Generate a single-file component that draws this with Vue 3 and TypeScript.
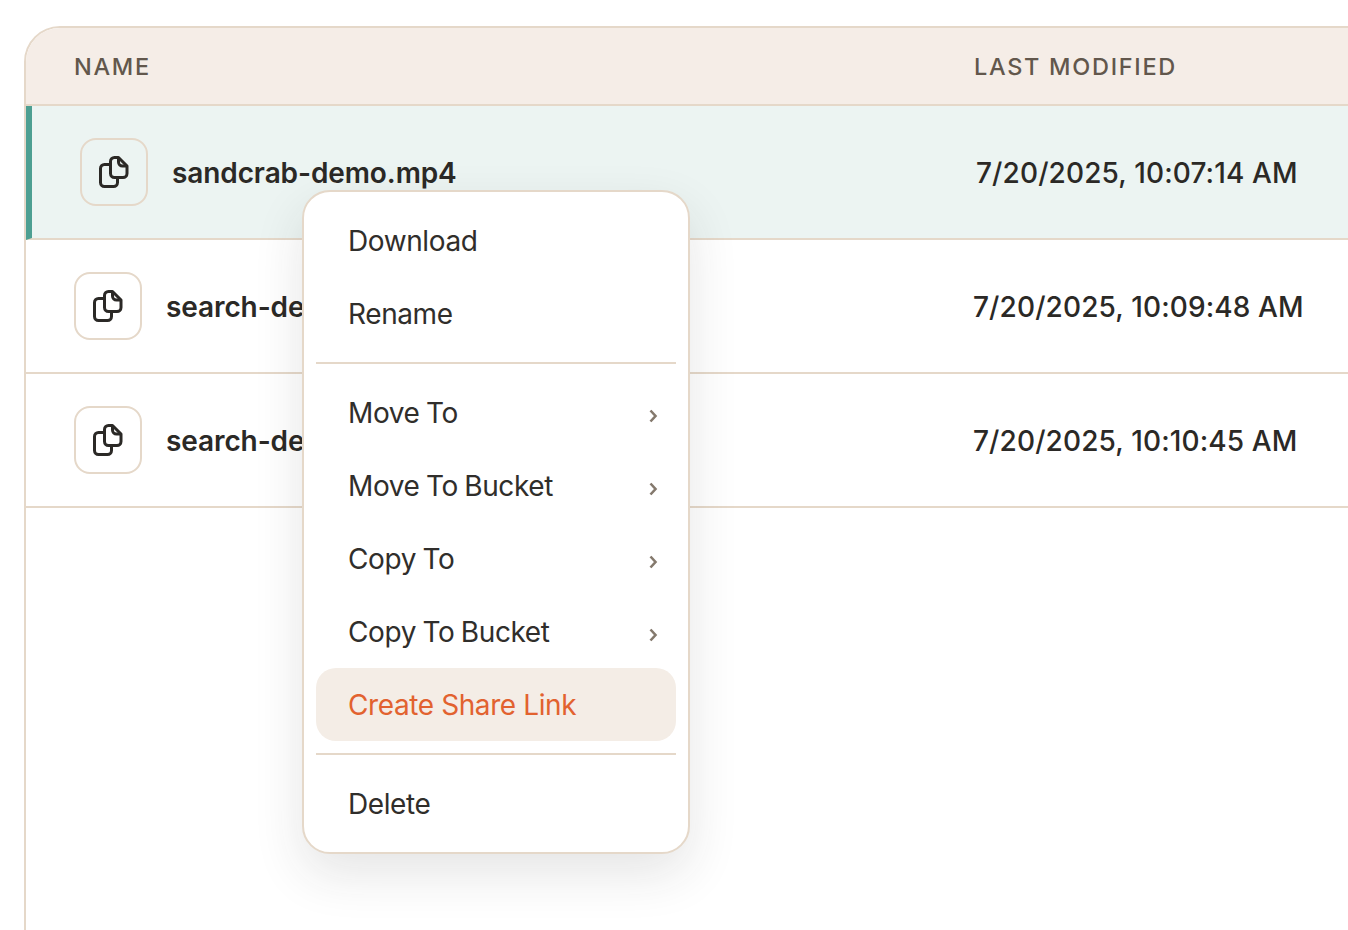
<script setup lang="ts">
type FileRow = { name: string; modified: string; selected?: boolean };

const files: FileRow[] = [
  { name: "sandcrab-demo.mp4", modified: "7/20/2025, 10:07:14 AM", selected: true },
  { name: "search-demo-1.mp4", modified: "7/20/2025, 10:09:48 AM" },
  { name: "search-demo-2.mp4", modified: "7/20/2025, 10:10:45 AM" },
];

type MenuItem = { label: string; sub?: boolean; active?: boolean };

const menuGroups: MenuItem[][] = [
  [{ label: "Download" }, { label: "Rename" }],
  [
    { label: "Move To", sub: true },
    { label: "Move To Bucket", sub: true },
    { label: "Copy To", sub: true },
    { label: "Copy To Bucket", sub: true },
    { label: "Create Share Link", active: true },
  ],
  [{ label: "Delete" }],
];
</script>

<template>
  <div class="page">
    <div class="table">
      <div class="head">
        <div class="head-name">NAME</div>
        <div>LAST MODIFIED</div>
      </div>
      <div
        v-for="file in files"
        :key="file.name"
        class="row"
        :class="{ selected: file.selected }"
      >
        <div class="name-cell">
          <span class="file-icon">
            <svg width="32" height="34" viewBox="0 0 32 34" fill="none">
              <path
                d="M12.500 9.500H6.500A4 4 0 0 0 2.500 13.500V27.500A4 4 0 0 0 6.500 31.500H15.500A4 4 0 0 0 19.500 27.500V22.500"
                stroke="currentColor"
                stroke-width="3"
                stroke-linejoin="round"
              />
              <path
                d="M16.500 2.500H20.500L29 11V18.500A4 4 0 0 1 25 22.500H16.500A4 4 0 0 1 12.500 18.500V6.500A4 4 0 0 1 16.500 2.500Z"
                stroke="currentColor"
                stroke-width="3"
                stroke-linejoin="round"
              />
              <path
                d="M20.500 2.500V7A4 4 0 0 0 24.500 11H29"
                stroke="currentColor"
                stroke-width="3"
                stroke-linejoin="round"
              />
            </svg>
          </span>
          <span class="file-name">{{ file.name }}</span>
        </div>
        <div class="date-cell">{{ file.modified }}</div>
      </div>
    </div>

    <div class="menu">
      <template v-for="(group, i) in menuGroups" :key="i">
        <div v-if="i > 0" class="divider"></div>
        <div
          v-for="item in group"
          :key="item.label"
          class="menu-item"
          :class="{ active: item.active }"
        >
          <span>{{ item.label }}</span>
          <svg v-if="item.sub" class="chevron" width="10" height="16" viewBox="0 0 10 16" fill="none">
            <path d="M2.500 2.500L7.500 8L2.500 13.500" stroke="currentColor" stroke-width="2.600" />
          </svg>
        </div>
      </template>
    </div>
  </div>
</template>

<style>
html,
body {
  margin: 0;
  height: 100%;
  overflow: hidden;
  background: #fff;
}
</style>

<style scoped>
.page {
  position: relative;
  width: 1348px;
  height: 930px;
  overflow: hidden;
  box-sizing: border-box;
  padding: 26px 0 0 24px;
  font-family: Inter, "Liberation Sans", sans-serif;
  color: #2b2926;
}

.table {
  width: 1500px;
  height: 1000px;
  box-sizing: border-box;
  border: 2px solid #e5d8c9;
  border-radius: 36px 0 0 0;
  overflow: hidden;
}

.head {
  display: flex;
  align-items: center;
  height: 76px;
  background: #f5ede7;
  border-bottom: 2px solid #e5d8c9;
  color: #62574c;
  font-size: 23.500px;
  font-weight: 500;
  letter-spacing: 1.700px;
}

.head > div {
  padding-top: 1px;
}

.head-name {
  width: 948px;
  padding-left: 48px;
  box-sizing: border-box;
  flex-shrink: 0;
}

.row {
  display: flex;
  align-items: center;
  height: 132px;
  border-bottom: 2px solid #e5d8c9;
  background: #fff;
}

.row.selected {
  background: #ecf4f2;
  border-left: 6px solid #4d9f92;
}

.name-cell {
  display: flex;
  align-items: center;
  gap: 24px;
  width: 947px;
  padding-left: 48px;
  box-sizing: border-box;
  flex-shrink: 0;
}

.selected .name-cell {
  width: 944px;
}

.file-icon {
  display: flex;
  align-items: center;
  justify-content: center;
  width: 68px;
  height: 68px;
  box-sizing: border-box;
  border: 2px solid #e5d8c9;
  border-radius: 16px;
  background: #fff;
  color: #2b2926;
}

.selected .file-icon {
  background: transparent;
}

.file-name {
  padding-top: 2px;
  font-size: 28px;
  font-weight: 600;
  letter-spacing: -0.100px;
  white-space: nowrap;
}

.date-cell {
  padding-top: 2px;
  font-size: 28px;
  font-weight: 500;
  letter-spacing: 0.120px;
  white-space: nowrap;
}

.menu {
  position: absolute;
  left: 302px;
  top: 190px;
  width: 388px;
  box-sizing: border-box;
  padding: 12px;
  background: #fff;
  border: 2px solid #e5d8c9;
  border-radius: 28px;
  box-shadow: 0 20px 50px rgba(43, 41, 38, 0.12);
}

.menu-item {
  display: flex;
  align-items: center;
  justify-content: space-between;
  height: 73px;
  box-sizing: border-box;
  padding: 1px 18px 0 32px;
  border-radius: 20px;
  font-size: 28px;
  letter-spacing: -0.400px;
  word-spacing: -1px;
  color: #302e2b;
}

.menu-item.active {
  background: #f4ede6;
  color: #e2622f;
  word-spacing: 0;
}

.chevron {
  margin-top: 6px;
  color: #84796d;
}

.divider {
  height: 2px;
  margin: 12px 0;
  background: #e5d8c9;
}
</style>
